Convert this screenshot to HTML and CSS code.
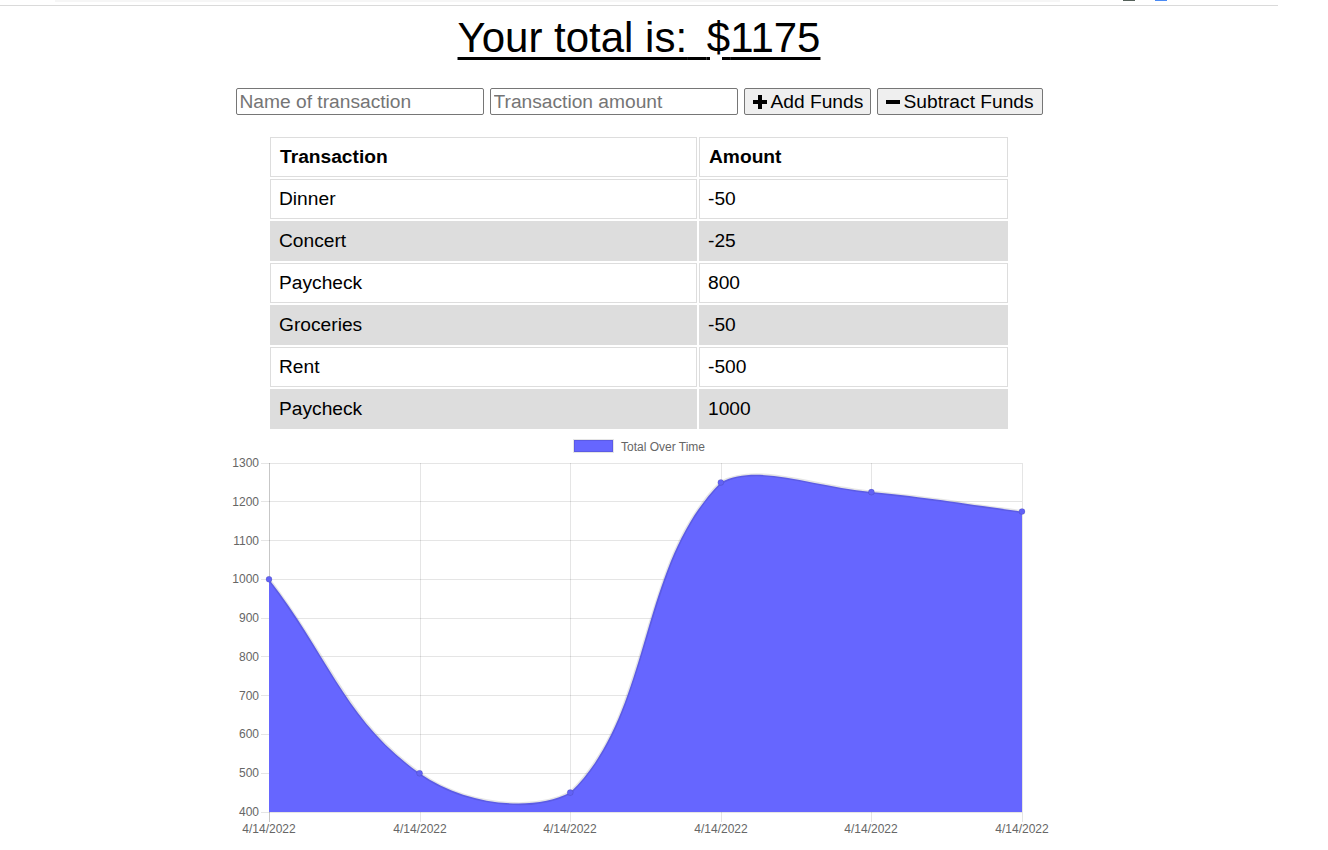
FILE: index.html
```html
<!DOCTYPE html>
<html lang="en">
<head>
<meta charset="utf-8">
<title>Budget Tracker</title>
<link rel="stylesheet" href="styles.css">
</head>
<body>
<div class="chrome">
  <span class="chrome-bar"></span>
  <span class="chrome-dot dark"></span>
  <span class="chrome-dot blue"></span>
</div>
<main class="page">
  <h1 class="total"><span class="u">Your total is:<span class="gap"> </span></span><span class="dollar">$</span><span class="u">1175</span></h1>
  <form class="controls">
    <input class="field" type="text" placeholder="Name of transaction">
    <input class="field" type="text" placeholder="Transaction amount">
    <button class="btn btn-add" type="button"><svg class="ico" viewBox="0 0 14 14"><path d="M5 0h4v5h5v4H9v5H5V9H0V5h5z"/></svg>Add Funds</button>
    <button class="btn btn-sub" type="button"><svg class="ico" viewBox="0 0 14 14"><path d="M0 5h14v4H0z"/></svg>Subtract Funds</button>
  </form>
  <table class="tx">
    <thead>
      <tr><th class="c1">Transaction</th><th class="c2">Amount</th></tr>
    </thead>
    <tbody>
      <tr><td>Dinner</td><td>-50</td></tr>
      <tr><td>Concert</td><td>-25</td></tr>
      <tr><td>Paycheck</td><td>800</td></tr>
      <tr><td>Groceries</td><td>-50</td></tr>
      <tr><td>Rent</td><td>-500</td></tr>
      <tr><td>Paycheck</td><td>1000</td></tr>
    </tbody>
  </table>
  <svg class="chart" width="820" height="410" viewBox="229 431 820 410">
    <g class="legend">
      <rect x="574" y="440" width="39" height="12" fill="#6666ff" stroke="rgba(0,0,0,0.1)" stroke-width="2"/>
      <text x="621" y="447.5" class="lbl" dominant-baseline="middle">Total Over Time</text>
    </g>
    <g class="grid" stroke="rgba(0,0,0,0.1)" stroke-width="1">
      <line x1="261" y1="463.5" x2="1022" y2="463.5"/>
      <line x1="261" y1="501.5" x2="1022" y2="501.5"/>
      <line x1="261" y1="540.5" x2="1022" y2="540.5"/>
      <line x1="261" y1="579.5" x2="1022" y2="579.5"/>
      <line x1="261" y1="618.5" x2="1022" y2="618.5"/>
      <line x1="261" y1="656.5" x2="1022" y2="656.5"/>
      <line x1="261" y1="695.5" x2="1022" y2="695.5"/>
      <line x1="261" y1="734.5" x2="1022" y2="734.5"/>
      <line x1="261" y1="773.5" x2="1022" y2="773.5"/>
      <line x1="261" y1="812.5" x2="1022" y2="812.5"/>
      <line x1="420.5" y1="463" x2="420.5" y2="822"/>
      <line x1="570.5" y1="463" x2="570.5" y2="822"/>
      <line x1="721.5" y1="463" x2="721.5" y2="822"/>
      <line x1="871.5" y1="463" x2="871.5" y2="822"/>
      <line x1="1022.5" y1="463" x2="1022.5" y2="822"/>
    </g>
    <line x1="269.5" y1="463" x2="269.5" y2="822" stroke="rgba(0,0,0,0.22)" stroke-width="1"/>
    <g class="lbl" text-anchor="end">
      <text x="259" y="464" dominant-baseline="middle">1300</text>
      <text x="259" y="503" dominant-baseline="middle">1200</text>
      <text x="259" y="542" dominant-baseline="middle">1100</text>
      <text x="259" y="580" dominant-baseline="middle">1000</text>
      <text x="259" y="619" dominant-baseline="middle">900</text>
      <text x="259" y="658" dominant-baseline="middle">800</text>
      <text x="259" y="697" dominant-baseline="middle">700</text>
      <text x="259" y="735" dominant-baseline="middle">600</text>
      <text x="259" y="774" dominant-baseline="middle">500</text>
      <text x="259" y="813" dominant-baseline="middle">400</text>
    </g>
    <g class="lbl" text-anchor="middle">
      <text x="269" y="830" dominant-baseline="middle">4/14/2022</text>
      <text x="420" y="830" dominant-baseline="middle">4/14/2022</text>
      <text x="570" y="830" dominant-baseline="middle">4/14/2022</text>
      <text x="721" y="830" dominant-baseline="middle">4/14/2022</text>
      <text x="871" y="830" dominant-baseline="middle">4/14/2022</text>
      <text x="1022" y="830" dominant-baseline="middle">4/14/2022</text>
    </g>
    <path fill="#6666ff" d="M269,579.3 C329.24,656.86 345.14,720.47 419.6,773.2 C465.62,805.79 533.36,812 570.2,792.6 C653.84,711.84 637.0,566.0 720.8,482.4 C757.49,463 811.34,486.3 871.4,492.1 C931.82,497.94 961.76,503.74 1022,511.5 L1022,812 L269,812 Z"/>
    <path fill="none" stroke="rgba(0,0,0,0.1)" stroke-width="3" d="M269,579.3 C329.24,656.86 345.14,720.47 419.6,773.2 C465.62,805.79 533.36,812 570.2,792.6 C653.84,711.84 637.0,566.0 720.8,482.4 C757.49,463 811.34,486.3 871.4,492.1 C931.82,497.94 961.76,503.74 1022,511.5"/>
    <g fill="#6262f5" stroke="rgba(0,0,0,0.1)" stroke-width="1">
      <circle cx="269" cy="579.3" r="3"/>
      <circle cx="419.6" cy="773.2" r="3"/>
      <circle cx="570.2" cy="792.6" r="3"/>
      <circle cx="720.8" cy="482.4" r="3"/>
      <circle cx="871.4" cy="492.1" r="3"/>
      <circle cx="1022" cy="511.5" r="3"/>
    </g>
  </svg>
</main>
</body>
</html>
```
FILE: styles.css
```css
* { box-sizing: border-box; }

html, body {
  margin: 0;
  padding: 0;
  background: #fff;
}

body {
  font-family: "Liberation Sans", Arial, sans-serif;
  color: #000;
  padding-right: 50px;
}

.chrome {
  height: 6px;
  border-bottom: 1px solid #dadada;
  display: flex;
  align-items: flex-start;
  padding-left: 55px;
}

.chrome-bar {
  width: 1005px;
  height: 2px;
  background: #f6f6f6;
}

.chrome-dot {
  width: 12px;
  height: 1px;
  margin-left: 63px;
}

.chrome-dot.dark { background: #55615a; }
.chrome-dot.blue { background: #4a8af4; margin-left: 20px; }

.page {
  width: 820px;
  margin: 0 auto;
}

.total {
  margin: 8px 0 0;
  font-size: 42px;
  font-weight: normal;
  line-height: 48px;
  text-align: center;
}

.total .u {
  text-decoration: underline;
  text-decoration-thickness: 3px;
  text-underline-offset: 5px;
}

.total .gap {
  word-spacing: 8px;
}

.total .dollar {
  background-image: linear-gradient(#000, #000), linear-gradient(#000, #000);
  background-repeat: no-repeat;
  background-size: 3px 3px, 8px 3px;
  background-position: left 0 top 43px, right 0 top 43px;
}

.controls {
  margin: 26px -6px 0;
  display: flex;
  justify-content: center;
  gap: 6px;
}

.field {
  width: 248px;
  height: 27px;
  padding: 1px 3px;
  font-family: "Liberation Sans", Arial, sans-serif;
  font-size: 19.2px;
  border: 1px solid #767676;
  border-radius: 2px;
  background: #fff;
  color: #000;
}

.field::placeholder {
  color: #757575;
}

.btn {
  height: 27px;
  padding: 0 0 0 8px;
  display: flex;
  align-items: center;
  gap: 4px;
  font-family: "Liberation Sans", Arial, sans-serif;
  font-size: 19.2px;
  color: #000;
  background: #efefef;
  border: 1px solid #767676;
  border-radius: 2px;
}

.btn-add { width: 127px; }
.btn-sub { width: 166px; }

.ico {
  width: 14px;
  height: 14px;
  fill: #000;
}

.tx {
  width: 742px;
  margin: 20px auto 0;
  border-collapse: separate;
  border-spacing: 2px;
  table-layout: fixed;
  font-size: 19.2px;
}

.tx th,
.tx td {
  border: 1px solid #dddddd;
  padding: 7px 8px 8px;
  height: 40px;
  text-align: left;
  line-height: 22px;
}

.tx th { font-weight: bold; padding-left: 9px; }

.tx .c1 { width: 427px; }

.tx tbody tr:nth-child(even) td {
  background: #dddddd;
}

.chart {
  display: block;
}

.lbl {
  font-family: "Liberation Sans", Arial, sans-serif;
  font-size: 12px;
  fill: #666;
}
```
